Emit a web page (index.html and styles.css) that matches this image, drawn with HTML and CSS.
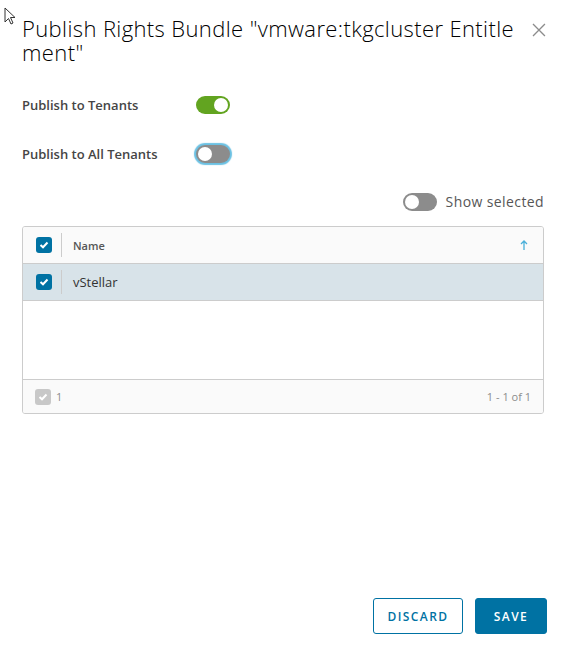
FILE: index.html
```html
<!DOCTYPE html>
<html>
<head>
<meta charset="utf-8">
<link rel="stylesheet" href="styles.css">
</head>
<body>
<div class="modal">
  <svg class="cursor" width="14" height="20" viewBox="0 0 14 20"><path d="M1 1 L1 15 L4.5 11.5 L7 17 L9 16 L6.5 10.5 L11 10.5 Z" fill="#fff" stroke="#333" stroke-width="1"/></svg>
  <div class="header">
    <h1 class="title">Publish Rights Bundle "vmware:tkgcluster Entitlement"</h1>
    <svg class="close" width="16" height="16" viewBox="0 0 16 16"><path d="M2 2 L14 14 M14 2 L2 14" stroke="#8c8c8c" stroke-width="1.3"/></svg>
  </div>
  <div class="form">
    <div class="field">
      <span class="label">Publish to Tenants</span>
      <span class="toggle on"><span class="knob"></span></span>
    </div>
    <div class="field">
      <span class="label">Publish to All Tenants</span>
      <span class="toggle off focus"><span class="knob"></span></span>
    </div>
  </div>
  <div class="show-selected">
    <span class="toggle off"><span class="knob"></span></span>
    <span class="show-text">Show selected</span>
  </div>
  <div class="grid">
    <div class="grid-head">
      <div class="cell-check"><span class="cb checked"><svg width="10" height="8" viewBox="0 0 10 8"><path d="M1.5 4 L4 6.3 L8.5 1.5" fill="none" stroke="#fff" stroke-width="2"/></svg></span></div>
      <div class="sep"></div>
      <div class="head-name">Name</div>
      <svg class="sort" width="8" height="10" viewBox="0 0 8 10"><path d="M4 1 L4 10 M1 4 L4 1 L7 4" fill="none" stroke="#49afd9" stroke-width="1.3"/></svg>
    </div>
    <div class="grid-row">
      <div class="cell-check"><span class="cb checked"><svg width="10" height="8" viewBox="0 0 10 8"><path d="M1.5 4 L4 6.3 L8.5 1.5" fill="none" stroke="#fff" stroke-width="2"/></svg></span></div>
      <div class="sep"></div>
      <div class="row-name">vStellar</div>
    </div>
    <div class="grid-empty"></div>
    <div class="grid-foot">
      <span class="cb disabled"><svg width="10" height="8" viewBox="0 0 10 8"><path d="M1.5 4 L4 6.3 L8.5 1.5" fill="none" stroke="#fff" stroke-width="2"/></svg></span>
      <span class="foot-count">1</span>
      <span class="foot-pages">1 - 1 of 1</span>
    </div>
  </div>
  <div class="spacer"></div>
  <div class="footer">
    <button class="btn outline">DISCARD</button>
    <button class="btn primary">SAVE</button>
  </div>
</div>
</body>
</html>
```
FILE: styles.css
```css
* { box-sizing: border-box; }
html, body { margin: 0; padding: 0; background: #fff; }
body { font-family: "Open Sans", Lato, sans-serif; color: #333; width: 565px; height: 654px; overflow: hidden; }
.modal { position: relative; height: 654px; padding: 16px 18px 20px 22px; display: flex; flex-direction: column; }
.cursor { position: absolute; left: 4px; top: 7px; }
.header { display: flex; align-items: flex-start; }
.title { margin: 0; font-weight: 300; font-size: 22px; line-height: 24px; color: #000; width: 508px; word-break: break-all; letter-spacing: 0.38px; }
.close { margin-left: 3px; margin-top: 6px; }
.form { margin-top: 31px; display: flex; flex-direction: column; gap: 30px; }
.field { display: flex; align-items: center; height: 19px; }
.label { width: 174px; font-size: 13px; font-weight: 600; color: #454545; }
.toggle { position: relative; display: inline-block; width: 34px; height: 18px; border-radius: 9px; }
.toggle.on { background: #62a420; }
.toggle.off { background: #8c8c8c; }
.toggle.focus { box-shadow: 0 0 1px 2px #6bc1e3; }
.knob { position: absolute; top: 2px; width: 14px; height: 14px; border-radius: 50%; background: #fff; }
.toggle.on .knob { right: 2px; }
.toggle.off .knob { left: 2px; }
.show-selected { margin-top: 29px; display: flex; justify-content: flex-end; align-items: center; gap: 9px; padding-right: 3px; }
.show-text { font-size: 14px; color: #565656; letter-spacing: 0.4px; }
.grid { margin-top: 15px; width: 522px; border: 1px solid #ccc; border-radius: 3px; overflow: hidden; }
.grid-head { display: flex; align-items: center; height: 37px; background: #fafafa; border-bottom: 1px solid #ccc; position: relative; }
.grid-row { display: flex; align-items: center; height: 37px; background: #d8e3e9; border-bottom: 1px solid #ccc; }
.cell-check { width: 38px; display: flex; justify-content: center; padding-left: 4px; }
.sep { width: 1px; height: 24px; background: #ccc; }
.cb { display: inline-flex; align-items: center; justify-content: center; width: 16px; height: 16px; border-radius: 3px; }
.cb.checked { background: #0072a3; }
.cb.disabled { background: #c8c8c8; }
.head-name { margin-left: 11px; font-size: 11px; font-weight: 600; color: #565656; flex: 1; }
.sort { margin-right: 15px; }
.row-name { margin-left: 11px; font-size: 13px; color: #333; }
.grid-empty { height: 78px; }
.grid-foot { display: flex; align-items: center; height: 34px; background: #fafafa; border-top: 1px solid #ccc; padding: 0 12px 0 12px; }
.foot-count { margin-left: 5px; font-size: 11px; color: #8c8c8c; flex: 1; }
.foot-pages { font-size: 11px; color: #8c8c8c; }
.spacer { flex: 1; }
.footer { display: flex; justify-content: flex-end; gap: 12px; }
.btn { height: 36px; border-radius: 3px; font-family: "Open Sans", sans-serif; font-size: 12px; font-weight: 600; letter-spacing: 1.4px; padding: 0 8px; cursor: pointer; }
.btn.outline { width: 90px; background: #fff; border: 1px solid #0072a3; color: #0072a3; }
.btn.primary { width: 72px; background: #0072a3; border: 1px solid #0072a3; color: #fff; }
```
